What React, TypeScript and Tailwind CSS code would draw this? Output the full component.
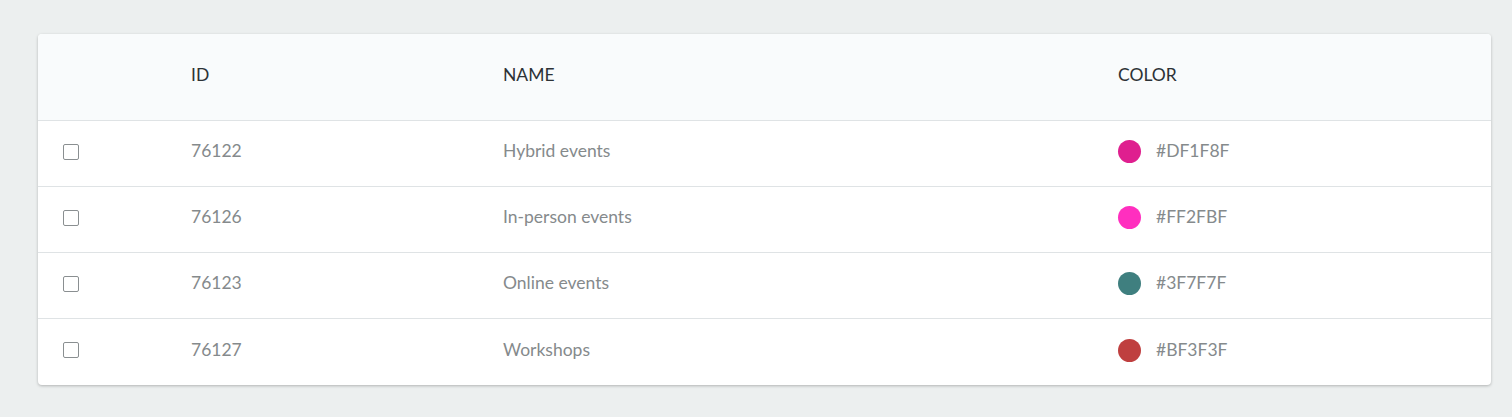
import React from 'react';

const rows = [
  { id: '76122', name: 'Hybrid events', color: '#DF1F8F' },
  { id: '76126', name: 'In-person events', color: '#FF2FBF' },
  { id: '76123', name: 'Online events', color: '#3F7F7F' },
  { id: '76127', name: 'Workshops', color: '#BF3F3F' },
];

const cols = 'grid grid-cols-[153px_312px_615px_1fr] items-center';

export default function App() {
  return (
    <div className="min-h-[417px] bg-[#ecefef] pt-[34px] font-['Lato',sans-serif]">
      <div className="ml-[38px] w-[1453px] overflow-hidden rounded-[4px] bg-white shadow-[0_1px_3px_rgba(0,0,0,0.25)]">
        {/* header */}
        <div className={`${cols} h-[87px] border-b border-[#dfe3e5] bg-[#f9fbfc] pb-[4px] text-[17.5px] text-[#2d3236]`}>
          <div />
          <div>ID</div>
          <div>NAME</div>
          <div>COLOR</div>
        </div>
        {rows.map((r, i) => (
          <div
            key={r.id}
            className={`${cols} h-[66px] pb-[4px] text-[17.5px] text-[#858a8c] ${i < rows.length - 1 ? 'border-b border-[#dfe3e5]' : ''}`}
          >
            <div className="pl-[25px]">
              <div className="h-[16px] w-[16px] rounded-[2px] border-[1.5px] border-[#8a8f91]" />
            </div>
            <div>{r.id}</div>
            <div>{r.name}</div>
            <div className="flex items-center gap-[15px]">
              <span className="h-[23px] w-[23px] rounded-full" style={{ backgroundColor: r.color }} />
              <span>{r.color}</span>
            </div>
          </div>
        ))}
      </div>
    </div>
  );
}
